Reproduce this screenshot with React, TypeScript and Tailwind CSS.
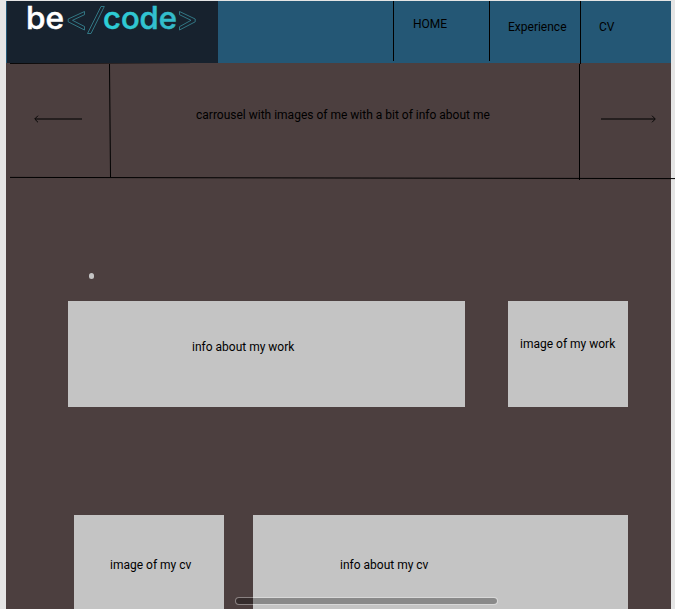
function Logo() {
  return (
    <svg className="block h-full w-full overflow-visible" viewBox="0 0 211 62" aria-label="be code">
      <defs>
        <linearGradient id="teal" x1="0" y1="0" x2="1" y2="0">
          <stop offset="0" stopColor="#2cd0d8" />
          <stop offset="1" stopColor="#34b9ca" />
        </linearGradient>
      </defs>
      <text x="19" y="28.2" fill="#ffffff" stroke="#ffffff" strokeWidth="0.5" className="font-['Inter',sans-serif] text-[31px] font-medium" textLength="38" lengthAdjust="spacingAndGlyphs">be</text>
      <text x="96" y="28.2" fill="url(#teal)" stroke="url(#teal)" strokeWidth="0.5" className="font-['Inter',sans-serif] text-[31px] font-medium" textLength="74" lengthAdjust="spacingAndGlyphs">code</text>
      <g fill="none" stroke="#398b99" strokeWidth="0.8">
        <path d="M77.5 10.5V13.7L65.5 19.3L77.5 25.5V29L61.2 20.8V18Z" />
        <path d="M94 5.5H97.3L84 32.5H80.5Z" />
        <path d="M172.5 10.5V13.7L184 19.3L172.5 25.7V29L188.2 20.8V18Z" />
      </g>
    </svg>
  );
}

function Carousel() {
  return (
    <section className="relative flex h-[116px] text-black">
      <button className="flex w-[104px] justify-center pt-[51px]" aria-label="Previous">
        <svg className="h-[10px] w-[50px]" viewBox="0 0 50 10" fill="none">
          <path d="M2 5H49" stroke="#251f1f" strokeWidth="1.8" />
          <path d="M5 1.7L1.7 5L5 8.3" stroke="#080707" />
        </svg>
      </button>
      <div className="w-[470px] pt-[44px] pl-[86px] leading-4">carrousel with images of me with a bit of info about me</div>
      <button className="flex flex-1 pt-[51px] pl-[20px]" aria-label="Next">
        <svg className="h-[10px] w-[57px]" viewBox="0 0 57 10" fill="none">
          <path d="M1 5H55" stroke="#251f1f" strokeWidth="1.8" />
          <path d="M52 1.7L55.3 5L52 8.3" stroke="#080707" />
        </svg>
      </button>
      <svg className="pointer-events-none absolute top-0 left-0 h-[117px] w-[669px]" viewBox="0 0 669 117" stroke="#000000">
        <path d="M4 .4L184 -.4M103.5 1L104.5 114M573.5 1V117M4 114.4L669 115.6" />
      </svg>
    </section>
  );
}

export default function App() {
  return (
    <div className="h-[609px] w-[675px] overflow-hidden bg-[#e5e5e5] pt-px pl-[6px] font-['Roboto',sans-serif] text-xs">
      <main className="relative h-[608px] w-[665px] bg-[#4c3f3f]">
        <header className="flex h-[62px] bg-[#245775] pl-px text-black">
          <div className="w-[211px] bg-[#17222e]"><Logo /></div>
          <nav className="ml-[175px] flex flex-1 leading-4">
            <a className="h-[60px] w-24 border-l border-black pt-[15px] pl-[19px]">HOME</a>
            <a className="h-[60px] w-[91px] border-l border-black pt-[18px] pl-[18px]">Experience</a>
            <a className="h-[63px] flex-1 border-l border-black pt-[18px] pl-[18px]">CV</a>
          </nav>
        </header>
        <Carousel />
        <div className="mt-[94px] ml-[83px] h-[6px] w-[5px] rounded-full bg-[#c4c4c4]" />
        <section className="mt-[22px] ml-[62px] flex gap-[43px] leading-4">
          <article className="h-[106px] w-[397px] bg-[#c4c4c4] pt-[38px] pl-[124px]">info about my work</article>
          <article className="h-[106px] w-[120px] bg-[#c4c4c4] pt-[35px] pl-[12px]">image of my work</article>
        </section>
        <section className="mt-[108px] ml-[68px] flex gap-[29px] leading-4">
          <article className="h-[94px] w-[150px] bg-[#c4c4c4] pt-[42px] pl-[36px]">image of my cv</article>
          <article className="h-[94px] w-[375px] bg-[#c4c4c4] pt-[42px] pl-[87px]">info about my cv</article>
        </section>
        <div className="absolute top-[596px] left-[229px] h-[8px] w-[263px] rounded-full border border-white/35 bg-black/30 bg-clip-padding" />
      </main>
    </div>
  );
}
